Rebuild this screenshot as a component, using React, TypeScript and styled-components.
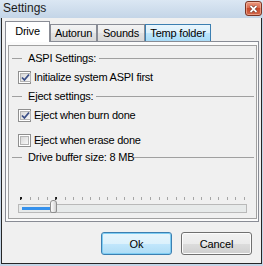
import React from "react";
import styled, { createGlobalStyle } from "styled-components";

const GlobalStyle = createGlobalStyle`
  html, body {
    margin: 0;
    padding: 0;
    background: #c4d5e7;
  }
  body {
    font-family: "Liberation Sans", Arial, sans-serif;
    font-size: 11px;
    color: #000;
  }
`;

const Window = styled.div`
  width: 263px;
  height: 266px;
  display: flex;
  flex-direction: column;
  background: linear-gradient(#dbe7f3, #c4d5e7 18px, #c4d5e7);
  overflow: hidden;
`;

const TitleBar = styled.div`
  height: 18px;
  flex-shrink: 0;
  box-sizing: border-box;
  display: flex;
  justify-content: space-between;
  align-items: flex-start;
  padding: 1px 1px 0 3px;
`;

const Title = styled.span`
  font-size: 12px;
  line-height: 14px;
  color: #1b1b1b;
`;

const CloseButton = styled.div`
  width: 17px;
  height: 15px;
  box-sizing: border-box;
  border: 1px solid #7a3424;
  border-radius: 3px;
  background: linear-gradient(#eb9a80, #d8664a 50%, #c84a2c 50%, #d2684c);
  display: flex;
  align-items: center;
  justify-content: center;
  box-shadow: inset 0 0 0 1px rgba(255, 210, 190, 0.5);
`;

const Client = styled.div`
  flex: 1;
  margin: 0 1px 2px 1px;
  padding: 0 1px;
  background: #f0f0f0;
  border: 1px solid #262626;
  border-top: none;
  display: flex;
  flex-direction: column;
`;

const TabRow = styled.div`
  height: 23px;
  display: flex;
  align-items: flex-end;
  padding-left: 2px;
  position: relative;
  z-index: 1;
`;

const Tab = styled.div<{ $w: number; $active?: boolean; $hover?: boolean }>`
  width: ${(p) => p.$w}px;
  box-sizing: border-box;
  text-align: center;
  letter-spacing: -0.2px;
  line-height: 13px;
  border: 1px solid ${(p) => (p.$hover ? "#3c7fb1" : "#898c95")};
  border-bottom: none;
  ${(p) =>
    p.$active
      ? `
    height: 21px;
    margin-bottom: -1px;
    padding-top: 3px;
    background: #ffffff;
  `
      : `
    height: 17px;
    padding-top: 2px;
    background: ${
      p.$hover
        ? "linear-gradient(#eaf6fd, #d9f0fc 50%, #bee6fd 50%, #a9dbf6)"
        : "linear-gradient(#f3f3f3, #ebebeb 50%, #e2e2e2 50%, #d9d9d9)"
    };
  `}
`;

const Panel = styled.div`
  margin-left: 2px;
  width: 254px;
  height: 181px;
  box-sizing: border-box;
  border: 1px solid #898c95;
  background: #fbfbfb;
  padding: 3px 1px 2px 2px;
  display: flex;
`;

const Page = styled.div`
  flex: 1;
  border: 1px solid #a0a0a0;
  background: #f0f0f0;
  display: flex;
  flex-direction: column;
  padding-top: 3px;
`;

const GroupHeader = styled.div<{ $mt: number }>`
  margin-top: ${(p) => p.$mt}px;
  height: 13px;
  display: flex;
  align-items: center;
  padding-left: 3px;
  margin-right: 2px;
  line-height: 13px;
  letter-spacing: -0.2px;
  white-space: nowrap;
`;

const Dash = styled.span`
  width: 10px;
  height: 1px;
  background: #a0a0a0;
  margin-right: 6px;
`;

const Rule = styled.span<{ $gap: number }>`
  flex: 1;
  height: 1px;
  background: #a0a0a0;
  margin-left: ${(p) => p.$gap}px;
`;

const CheckRow = styled.label<{ $mt: number }>`
  margin-top: ${(p) => p.$mt}px;
  height: 13px;
  display: flex;
  align-items: center;
  gap: 3px;
  padding-left: 9px;
  line-height: 13px;
  letter-spacing: -0.25px;
  white-space: nowrap;
`;

const Box = styled.span`
  width: 13px;
  height: 13px;
  box-sizing: border-box;
  border: 1px solid #8f8f8f;
  background: #fff;
  padding: 1px;
  display: flex;
`;

const BoxInner = styled.span`
  flex: 1;
  border: 1px solid #b4b4b4;
  background: linear-gradient(135deg, #d8d8d8, #f8f8f8);
  display: flex;
  align-items: center;
  justify-content: center;
`;

const SliderArea = styled.div`
  margin-top: 33px;
  padding-left: 9px;
  display: flex;
  flex-direction: column;
`;

const Ticks = styled.div`
  width: 225px;
  height: 3px;
  margin-left: 2px;
  display: flex;
  justify-content: space-between;
  align-items: flex-start;
`;

const Tick = styled.span<{ $mark?: boolean }>`
  width: ${(p) => (p.$mark ? 2 : 1)}px;
  height: 3px;
  background: ${(p) => (p.$mark ? "#1a1a1a" : "#a6a6a6")};
  ${(p) => (p.$mark ? "clip-path: polygon(0 0, 100% 0, 100% 40%, 50% 100%, 0 100%);" : "")}
`;

const Track = styled.div`
  position: relative;
  margin-top: 4px;
  width: 229px;
  height: 9px;
  box-sizing: border-box;
  border: 1px solid #b9b9b9;
  background: #e7eaea;
  display: flex;
  align-items: center;
`;

const Fill = styled.span`
  height: 3px;
  margin-left: 3px;
  background: #3591ec;
`;

const Thumb = styled.span`
  position: absolute;
  top: -5px;
  width: 7px;
  height: 13px;
  box-sizing: border-box;
  border: 1px solid #8e8e8e;
  border-radius: 3px 3px 2px 2px;
  background: linear-gradient(90deg, #fdfdfd, #e4e4e4 60%, #d0d0d0);
`;

const ButtonRow = styled.div`
  margin-top: 10px;
  margin-right: 8px;
  display: flex;
  justify-content: flex-end;
  gap: 9px;
`;

const Button = styled.div<{ $default?: boolean }>`
  width: 71px;
  height: 23px;
  box-sizing: border-box;
  border-radius: 3px;
  border: 1px solid ${(p) => (p.$default ? "#3c7fb1" : "#707070")};
  background: ${(p) =>
    p.$default
      ? "linear-gradient(#e8f5fc, #dbf1fc 50%, #c2e7fc 50%, #aedcf5)"
      : "linear-gradient(#f2f2f2, #ebebeb 50%, #dddddd 50%, #cfcfcf)"};
  box-shadow: inset 0 0 0 1px ${(p) => (p.$default ? "#7fcdf3" : "#fcfcfc")};
  display: flex;
  align-items: center;
  justify-content: center;
  font-size: 11px;
  letter-spacing: -0.1px;
`;

const Check = () => (
  <svg width="9" height="9" viewBox="0 0 9 9">
    <path d="M1 4.5 L3.4 7 L8 1.5" fill="none" stroke="#3b4f87" strokeWidth="1.8" />
  </svg>
);

const CheckBox = ({ checked, label, mt }: { checked?: boolean; label: string; mt: number }) => (
  <CheckRow $mt={mt}>
    <Box>
      <BoxInner>{checked && <Check />}</BoxInner>
    </Box>
    <span>{label}</span>
  </CheckRow>
);

const tickCount = 27;
const value = 4;

export default function App() {
  return (
    <>
      <GlobalStyle />
      <Window>
        <TitleBar>
          <Title>Settings</Title>
          <CloseButton>
            <svg width="9" height="8" viewBox="0 0 9 8">
              <path d="M1.5 1 L7.5 7 M7.5 1 L1.5 7" stroke="#5a2418" strokeWidth="3" />
              <path d="M1.5 1 L7.5 7 M7.5 1 L1.5 7" stroke="#ffffff" strokeWidth="1.8" />
            </svg>
          </CloseButton>
        </TitleBar>
        <Client>
          <TabRow>
            <Tab $w={45} $active>Drive</Tab>
            <Tab $w={47}>Autorun</Tab>
            <Tab $w={48}>Sounds</Tab>
            <Tab $w={66} $hover>Temp folder</Tab>
          </TabRow>
          <Panel>
            <Page>
              <GroupHeader $mt={3}>
                <Dash />
                ASPI Settings:
                <Rule $gap={3} />
              </GroupHeader>
              <CheckBox checked label="Initialize system ASPI first" mt={6} />
              <GroupHeader $mt={6}>
                <Dash />
                Eject settings:
                <Rule $gap={3} />
              </GroupHeader>
              <CheckBox checked label="Eject when burn done" mt={6} />
              <CheckBox label="Eject when erase done" mt={12} />
              <GroupHeader $mt={4}>
                <Dash />
                Drive buffer size: 8 MB
                <Rule $gap={0} />
              </GroupHeader>
              <SliderArea>
                <Ticks>
                  {Array.from({ length: tickCount }, (_, i) => (
                    <Tick key={i} $mark={i === 0 || i === value} />
                  ))}
                </Ticks>
                <Track>
                  <Fill style={{ width: value * 8.6 - 6 }} />
                  <Thumb style={{ left: value * 8.6 - 3 }} />
                </Track>
              </SliderArea>
            </Page>
          </Panel>
          <ButtonRow>
            <Button $default>Ok</Button>
            <Button>Cancel</Button>
          </ButtonRow>
        </Client>
      </Window>
    </>
  );
}
